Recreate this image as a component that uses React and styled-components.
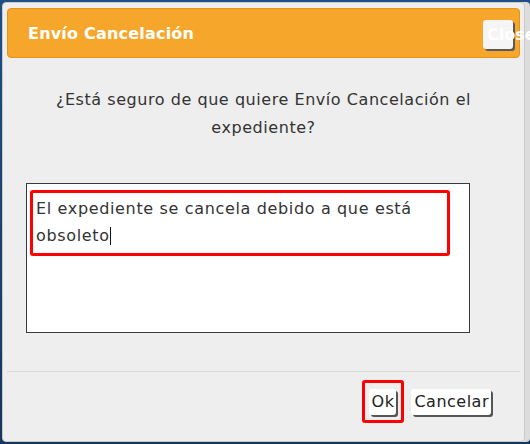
import React from "react";
import styled, { createGlobalStyle } from "styled-components";

const GlobalStyle = createGlobalStyle`
  html, body {
    margin: 0;
    padding: 0;
  }
  body {
    background: linear-gradient(180deg, #1e4f86, #16365e);
    font-family: "DejaVu Sans", "Open Sans", sans-serif;
  }
`;

const Page = styled.div`
  width: 530px;
  height: 444px;
  box-sizing: border-box;
  padding: 2px 0 0 2px;
  overflow: hidden;
`;

const Dialog = styled.div`
  width: 523px;
  height: 440px;
  box-sizing: border-box;
  background: #eeeeee;
  border: 1px solid #c9c9c9;
  border-radius: 4px;
  box-shadow: 5px 0 0 #dcdcdc;
  display: flex;
  flex-direction: column;
`;

const Header = styled.div`
  margin: 5px 4px 0 4px;
  height: 50px;
  box-sizing: border-box;
  background: #f6a72b;
  border: 1px solid #e8930f;
  border-radius: 4px;
  display: flex;
  align-items: center;
  justify-content: space-between;
  padding: 0 6px 0 20px;
`;

const Title = styled.span`
  color: #ffffff;
  font-size: 16px;
  font-weight: bold;
  letter-spacing: 0.2px;
`;

const CloseButton = styled.button`
  width: 30px;
  height: 29px;
  margin-top: 2px;
  padding: 0 0 0 4px;
  background: #f5f5f5;
  border: none;
  border-radius: 3px;
  box-shadow: 2px 2px 0 #5a5a5a;
  color: #ffffff;
  font-family: "DejaVu Sans", sans-serif;
  font-size: 16px;
  font-weight: bold;
  text-align: left;
  white-space: nowrap;
  overflow: visible;
`;

const Message = styled.p`
  margin: 28px 30px 0 30px;
  text-align: center;
  color: #333333;
  font-size: 16px;
  letter-spacing: 0.55px;
  line-height: 28px;
`;

const TextBox = styled.div`
  margin: 41px 0 0 23px;
  width: 444px;
  height: 150px;
  box-sizing: border-box;
  background: #ffffff;
  border: 1px solid #3a3a3a;
  padding: 6px 0 0 3px;
`;

const Marked = styled.div`
  display: ${(p) => (p.inline ? "inline-block" : "block")};
  border: 3px solid #ff0000;
  border-radius: 3px;
  box-sizing: border-box;
  width: ${(p) => p.width || "auto"};
  padding: ${(p) => p.pad || "0"};
`;

const Typed = styled.div`
  color: #333333;
  font-size: 16px;
  letter-spacing: 0.65px;
  line-height: 27px;
  padding: 2px 3px 4px 3px;
`;

const Caret = styled.span`
  display: inline-block;
  width: 1px;
  height: 18px;
  background: #111111;
  vertical-align: -4px;
`;

const Footer = styled.div`
  margin: 38px 4px 0 4px;
  border-top: 1px solid #dadada;
  display: flex;
  justify-content: flex-end;
  align-items: center;
  gap: 7px;
  padding: 8px 29px 0 0;
`;

const Button = styled.button`
  height: 26px;
  padding: 0 2px 0 3px;
  background: #ffffff;
  border: none;
  border-radius: 3px;
  box-shadow: 2px 2px 0 #555555;
  color: #222222;
  font-family: "DejaVu Sans", sans-serif;
  font-size: 16px;
  letter-spacing: 0.5px;
  line-height: 26px;
`;

export default function App() {
  return (
    <Page>
      <GlobalStyle />
      <Dialog>
        <Header>
          <Title>Envío Cancelación</Title>
          <CloseButton>Close</CloseButton>
        </Header>
        <Message>
          ¿Está seguro de que quiere Envío Cancelación el expediente?
        </Message>
        <TextBox>
          <Marked width="420px">
            <Typed>
              El expediente se cancela debido a que está
              <br />
              obsoleto
              <Caret />
            </Typed>
          </Marked>
        </TextBox>
        <Footer>
          <Marked inline pad="6px 5px 5px 4px">
            <Button>Ok</Button>
          </Marked>
          <Button>Cancelar</Button>
        </Footer>
      </Dialog>
    </Page>
  );
}
